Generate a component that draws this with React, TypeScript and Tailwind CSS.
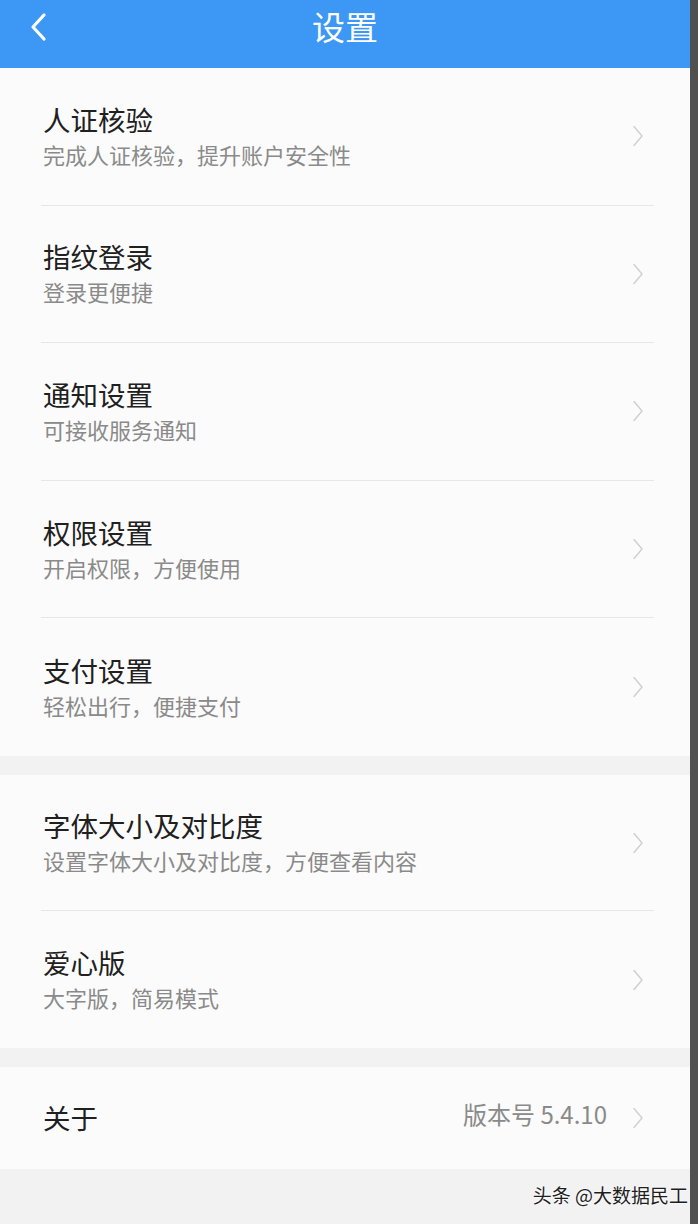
import React from "react";

const font = { fontFamily: '"Noto Sans CJK SC", "Noto Sans", sans-serif' };

function Chevron() {
  return (
    <svg width="12" height="22" viewBox="0 0 12 22" fill="none" className="shrink-0">
      <polyline points="2,1.5 10,11 2,20.5" stroke="#cfcfcf" strokeWidth="1.4" strokeLinecap="round" strokeLinejoin="round" />
    </svg>
  );
}

type Item = { title: string; sub: string };

function Row({ item, h, divider }: { item: Item; h: string; divider: boolean }) {
  return (
    <div className={`${h} flex flex-col`}>
      <div className="flex flex-1 items-center pl-[43px] pr-[46px]">
        <div className="flex flex-1 flex-col -mt-[4px]">
          <div className="text-[27.5px] leading-[30px] text-[#202020]">{item.title}</div>
          <div className="mt-[9px] text-[22px] leading-[22px] text-[#8a8a8a]">{item.sub}</div>
        </div>
        <Chevron />
      </div>
      {divider ? <div className="ml-[41px] mr-[36px] h-px bg-[#e6e6e6]" /> : null}
    </div>
  );
}

const group1: Item[] = [
  { title: "人证核验", sub: "完成人证核验，提升账户安全性" },
  { title: "指纹登录", sub: "登录更便捷" },
  { title: "通知设置", sub: "可接收服务通知" },
  { title: "权限设置", sub: "开启权限，方便使用" },
  { title: "支付设置", sub: "轻松出行，便捷支付" },
];

const group2: Item[] = [
  { title: "字体大小及对比度", sub: "设置字体大小及对比度，方便查看内容" },
  { title: "爱心版", sub: "大字版，简易模式" },
];

export default function App() {
  return (
    <div className="flex h-[1224px] w-[698px] overflow-hidden" style={font}>
      <div className="flex w-[690px] flex-col bg-[#f2f2f3]">
        <header className="relative flex h-[68px] items-center justify-center bg-[#3d97f4]">
          <svg width="20" height="30" viewBox="0 0 20 30" className="absolute left-[28px] top-[12px]" fill="none">
            <polyline points="16,3 5,15 16,27" stroke="#ffffff" strokeWidth="3.2" strokeLinecap="round" strokeLinejoin="round" />
          </svg>
          <div className="text-[33px] leading-none text-white -mt-[16px]">设置</div>
        </header>

        <div className="flex flex-col bg-[#fbfbfb]">
          {group1.map((it, i) => (
            <Row key={it.title} item={it} h="h-[137.6px]" divider={i < group1.length - 1} />
          ))}
        </div>

        <div className="h-[19px]" />

        <div className="flex flex-col bg-[#fbfbfb]">
          {group2.map((it, i) => (
            <Row key={it.title} item={it} h="h-[136.5px]" divider={i < group2.length - 1} />
          ))}
        </div>

        <div className="h-[19px]" />

        <div className="flex h-[102px] items-center bg-[#fbfbfb] pl-[43px] pr-[46px]">
          <div className="flex-1 text-[27.5px] leading-[30px] text-[#202020] -mt-[2px]">关于</div>
          <div className="mr-[25px] text-[24px] leading-[26px] text-[#8a8a8a] -mt-[8px]">版本号 5.4.10</div>
          <Chevron />
        </div>

        <div className="flex flex-1 items-start justify-end pr-[2px] pt-[14px]">
          <div
            className="text-[19px] leading-[24px] text-[#1e1e1e]"
            style={{ textShadow: "0 0 2px #ffffff, 0 0 2px #ffffff" }}
          >
            头条 @大数据民工
          </div>
        </div>
      </div>
      <div className="w-[8px] bg-[#505050]" />
    </div>
  );
}
